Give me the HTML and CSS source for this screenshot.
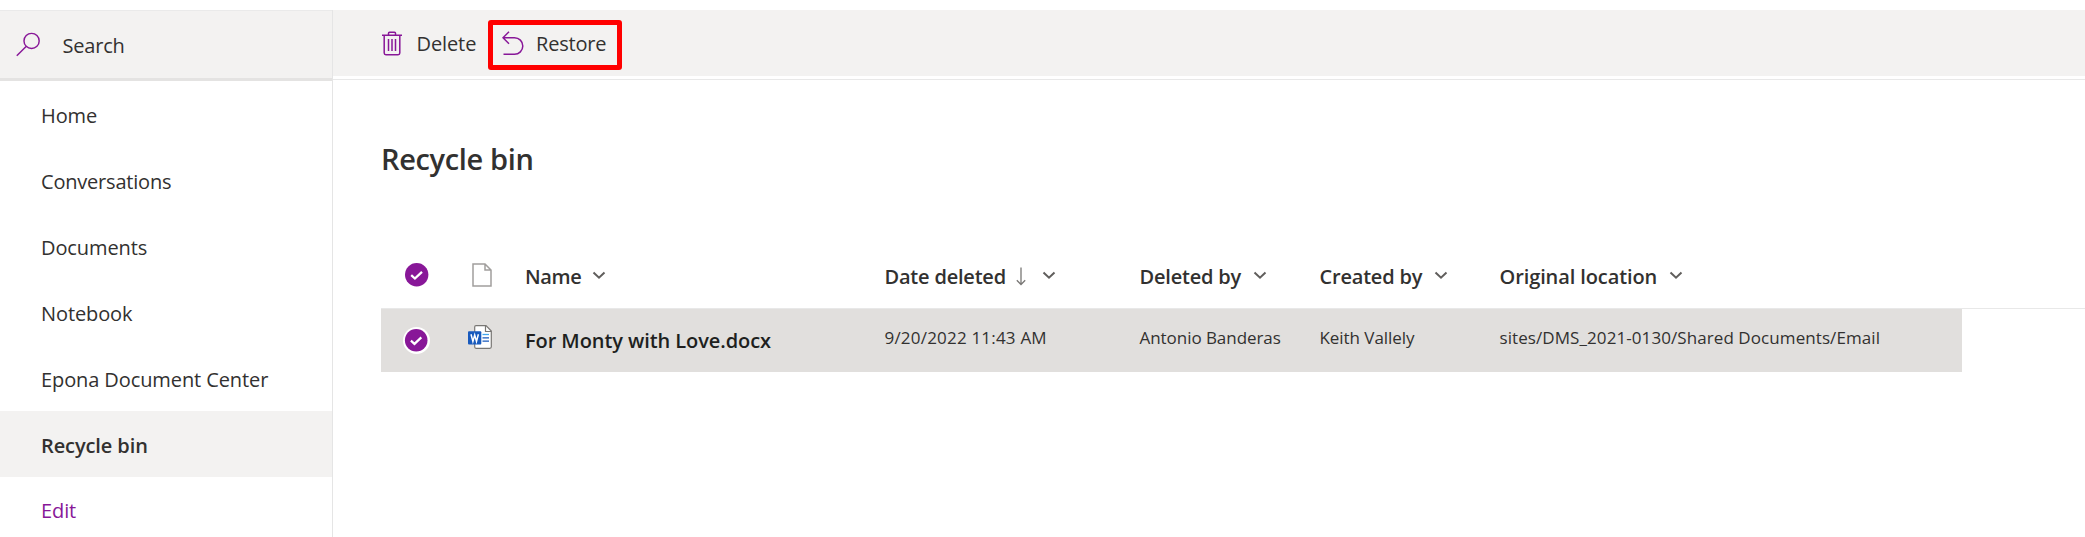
FILE: index.html
```html
<!DOCTYPE html>
<html lang="en">
<head>
<meta charset="utf-8">
<title>Recycle bin</title>
<link rel="stylesheet" href="styles.css">
</head>
<body>
<svg class="defs" aria-hidden="true">
  <symbol id="chevron" viewBox="0 0 14 9"><path d="M1.500 1.500 7 6.700l5.500-5.200" fill="none" stroke="#605e5c" stroke-width="2"/></symbol>
  <symbol id="check" viewBox="0 0 28 28"><circle cx="13.700" cy="13.700" r="11.700" fill="#881798"/><path d="M8.200 14.200l3.700 3.300 7.100-6.700" fill="none" stroke="#fff" stroke-width="2.300"/></symbol>
</svg>
<div class="app">
  <aside class="sidebar">
    <div class="search">
      <svg class="search-icon" viewBox="0 0 26 26"><circle cx="16.200" cy="9.300" r="7.900"/><path d="M10.500 15 .8 24.800"/></svg>
      <span class="search-label">Search</span>
    </div>
    <nav class="nav">
      <a class="nav-item home">Home</a>
      <a class="nav-item conversations">Conversations</a>
      <a class="nav-item documents">Documents</a>
      <a class="nav-item notebook">Notebook</a>
      <a class="nav-item epona">Epona Document Center</a>
      <a class="nav-item selected">Recycle bin</a>
      <a class="nav-item edit">Edit</a>
    </nav>
  </aside>
  <main class="main">
    <div class="toolbar">
      <button class="command delete"><svg class="trash" viewBox="0 0 20 25"><path d="M0 4.200h20M6.500 4V2.200q0-1 1-1h5q1 0 1 1V4M2.200 4.200V22q0 1.700 1.700 1.700h12.200q1.700 0 1.700-1.700V4.200M6.500 8v12M10 8v12M13.500 8v12"/></svg><span>Delete</span></button>
      <button class="command restore"><svg class="undo" viewBox="0 0 22 25"><path d="M7 .8 1 6.700l6 6M1 6.700h11.500a8.300 8.300 0 0 1 0 16.600H1.500"/></svg><span>Restore</span></button>
    </div>
    <h1 class="title">Recycle bin</h1>
    <div class="grid head">
      <span class="cell check-cell"><svg class="check"><use href="#check"/></svg></span>
      <span class="cell icon-cell"><svg class="page-icon" viewBox="0 0 20 24"><path d="M1 1h12l6 6v16H1zM13 1v6h6"/></svg></span>
      <span class="cell name">Name<svg class="chevron"><use href="#chevron"/></svg></span>
      <span class="cell date">Date deleted<svg class="sort" viewBox="0 0 10 18"><path d="M5 0v17M.8 12.800 5 17l4.200-4.200"/></svg><svg class="chevron"><use href="#chevron"/></svg></span>
      <span class="cell">Deleted by<svg class="chevron"><use href="#chevron"/></svg></span>
      <span class="cell">Created by<svg class="chevron"><use href="#chevron"/></svg></span>
      <span class="cell location">Original location<svg class="chevron"><use href="#chevron"/></svg></span>
    </div>
    <div class="grid row">
      <span class="cell check-cell"><svg class="check ringed"><use href="#check"/></svg></span>
      <span class="cell icon-cell"><svg class="word-icon" viewBox="0 0 24 24"><path d="M8 .7h10l5.300 5.300v15.800q0 1.500-1.500 1.500H8q-1.300 0-1.300-1.500V2Q6.700.7 8 .7z" fill="#fff" stroke="#797774" stroke-width="1.200"/><path d="M17.500.7V6.500h5.800" fill="none" stroke="#797774" stroke-width="1.200"/><path d="M14.500 9.500H21" stroke="#41a5ee" stroke-width="1.300"/><path d="M14.500 12.800H21M14.500 16.200H21" stroke="#185abd" stroke-width="1.300"/><rect y="6.300" width="13.300" height="13.300" rx="1" fill="#185abd"/><path d="M3 9.300 4.900 16.500 6.700 10l1.800 6.500 1.900-7.200" fill="none" stroke="#fff" stroke-width="1.500"/></svg></span>
      <span class="cell file">For Monty with Love.docx</span>
      <span class="cell value when">9/20/2022 11:43 AM</span>
      <span class="cell value">Antonio Banderas</span>
      <span class="cell value">Keith Vallely</span>
      <span class="cell value path">sites/DMS_2021-0130/Shared Documents/Email</span>
    </div>
  </main>
</div>
</body>
</html>
```
FILE: styles.css
```css
* { box-sizing: border-box; }
body { margin: 0; overflow: hidden; background: #fff; color: #323130; font: 20px/26px "Open Sans", "Noto Sans", sans-serif; letter-spacing: -0.2px; }
svg { flex: none; display: block; }
.defs { display: none; }
.app { display: flex; height: 537px; padding-top: 10px; overflow: hidden; }
.sidebar { width: 333px; flex: none; border-right: 1px solid #e5e5e5; }
.search { display: flex; height: 71px; padding: 21px 0 0 16px; background: #f3f2f1; border-top: 1px solid #eaeaea; border-bottom: 3px solid #e4e3e2; }
.search-icon { width: 25px; height: 25px; fill: none; stroke: #881798; stroke-width: 1.500; }
.search-label { margin: 1px 0 0 21.500px; }
.nav { display: flex; flex-direction: column; }
.nav-item { height: 66px; flex: none; padding: 22px 0 0 41px; letter-spacing: -0.100px; }
.conversations { letter-spacing: -0.200px; }
.selected { background: #f3f2f1; font-weight: 600; }
.edit { color: #881798; padding-top: 21px; }
.main { flex: 1; min-width: 0; }
.toolbar { display: flex; height: 70px; padding-left: 48px; background: linear-gradient(#f3f2f1 0 66px, #fff 66px 69px, #e8e8e8 69px); }
.command { display: flex; border: 0; padding: 0; background: none; font: inherit; letter-spacing: inherit; color: inherit; }
.command svg { fill: none; stroke: #881798; stroke-width: 1.500; }
.delete { width: 107px; padding: 21px 0 0 1px; letter-spacing: -0.100px; }
.delete span { margin-left: 14.500px; }
.trash { width: 20px; height: 25px; }
.restore { width: 134px; height: 50px; margin-top: 10px; padding: 6px 0 0 9px; border: 5px solid #f00; border-radius: 3px; }
.undo { width: 22px; height: 25px; }
.restore span { margin-left: 12px; }
.title { margin: 58px 0 0 48px; font-size: 29px; line-height: 42px; font-weight: 600; letter-spacing: -0.350px; }
.grid { display: grid; grid-template-columns: 87px 57px 359.500px 255px 180px 180px 1fr; margin-left: 48px; }
.head { height: 66px; margin-top: 63px; border-bottom: 1px solid #e8e8e8; font-weight: 600; }
.head .cell { display: flex; padding-top: 21px; }
.head .name { letter-spacing: -0.350px; }
.head .location { letter-spacing: -0.100px; }
.chevron { width: 14px; height: 9px; margin: 7px 0 0 12px; }
.name .chevron { margin-left: 11px; }
.sort { width: 10px; height: 19px; margin: 3px 0 0 10px; fill: none; stroke: #797775; stroke-width: 1.300; }
.date .chevron { margin-left: 16px; }
.grid .check-cell { padding: 18px 0 0 22px; }
.check { width: 28px; height: 28px; }
.ringed { width: 27px; height: 27px; border-radius: 50%; background: #fff; }
.grid .icon-cell { padding-top: 20px; }
.page-icon { width: 20px; height: 24px; margin-left: 4px; fill: #fff; stroke: #a19f9d; stroke-width: 1.500; }
.word-icon { width: 24px; height: 24px; }
.row { width: 1581px; height: 63px; background: #e1dfdd; }
.grid.row .check-cell { padding-top: 18px; }
.grid.row .icon-cell { padding-top: 16px; }
.file { padding-top: 19px; color: #201f1e; font-weight: 600; letter-spacing: -0.080px; }
.value { padding-top: 16px; font-size: 17px; letter-spacing: -0.050px; white-space: nowrap; }
.when { letter-spacing: 0.200px; }
.path { letter-spacing: 0.080px; }
```
